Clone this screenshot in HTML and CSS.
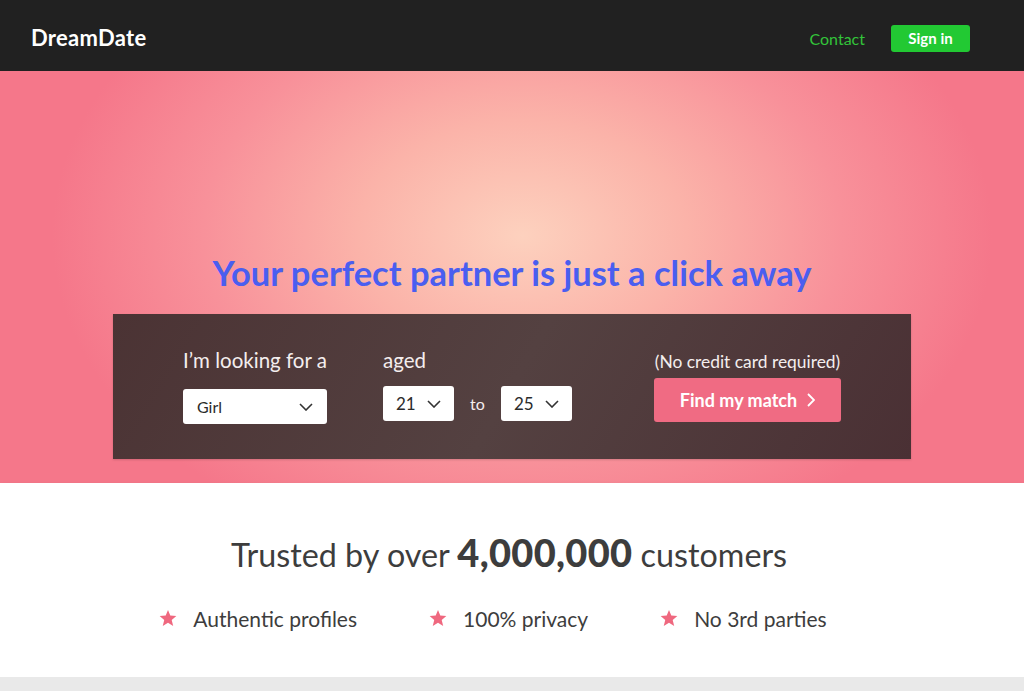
FILE: index.html
```html
<!DOCTYPE html>
<html lang="en">
<head>
    <meta charset="UTF-8">
    <meta name="viewport" content="width=device-width, initial-scale=1.0">
    <title>DreamDate</title>
    <link rel="stylesheet" href="styles.css">
</head>
<body>

    <!-- top bar -->
    <header class="navbar">
        <div class="logo">DreamDate</div>
        <nav class="nav-links">
            <a href="#" class="contact">Contact</a>
            <a href="#" class="signin">Sign in</a>
        </nav>
    </header>

    <!-- hero -->
    <section class="hero">
        <h1>Your perfect partner is just a click away</h1>

        <div class="search-box">
            <div class="col col-gender">
                <label>I’m looking for a</label>
                <div class="dropdown dropdown-wide">
                    <span>Girl</span>
                    <svg width="14" height="8" viewBox="0 0 14 8"><path d="M1 1l6 6 6-6" fill="none" stroke="#333" stroke-width="1.6"/></svg>
                </div>
            </div>

            <div class="col col-age">
                <label>aged</label>
                <div class="age-row">
                    <div class="dropdown dropdown-small">
                        <span>21</span>
                        <svg width="14" height="8" viewBox="0 0 14 8"><path d="M1 1l6 6 6-6" fill="none" stroke="#333" stroke-width="1.6"/></svg>
                    </div>
                    <span class="to">to</span>
                    <div class="dropdown dropdown-small">
                        <span>25</span>
                        <svg width="14" height="8" viewBox="0 0 14 8"><path d="M1 1l6 6 6-6" fill="none" stroke="#333" stroke-width="1.6"/></svg>
                    </div>
                </div>
            </div>

            <div class="col col-action">
                <div class="note">(No credit card required)</div>
                <button class="match-btn">Find my match
                    <svg width="8" height="14" viewBox="0 0 8 14"><path d="M1 1l6 6-6 6" fill="none" stroke="#fff" stroke-width="1.8"/></svg>
                </button>
            </div>
        </div>
    </section>

    <!-- trust -->
    <section class="trust">
        <h2>Trusted by over <strong>4,000,000</strong> customers</h2>
        <ul class="features">
            <li><svg class="star" width="18" height="17" viewBox="0 0 24 23"><path d="M12 0l3.1 7.6 8.2.6-6.3 5.3 2 8L12 17.2 4.9 21.5l2-8L.7 8.2l8.2-.6z" fill="#ef687f"/></svg>Authentic profiles</li>
            <li><svg class="star" width="18" height="17" viewBox="0 0 24 23"><path d="M12 0l3.1 7.6 8.2.6-6.3 5.3 2 8L12 17.2 4.9 21.5l2-8L.7 8.2l8.2-.6z" fill="#ef687f"/></svg>100% privacy</li>
            <li><svg class="star" width="18" height="17" viewBox="0 0 24 23"><path d="M12 0l3.1 7.6 8.2.6-6.3 5.3 2 8L12 17.2 4.9 21.5l2-8L.7 8.2l8.2-.6z" fill="#ef687f"/></svg>No 3rd parties</li>
        </ul>
    </section>

</body>
</html>
```

FILE: styles.css
```css
body {
    font-family: 'Lato', 'Open Sans', sans-serif;
    background-color: #e9e9e9;
    margin: 0;
    padding: 0;
}

.navbar {
    height: 71px;
    background-color: #212121;
    display: flex;
    align-items: center;
    justify-content: space-between;
    padding: 5px 54px 0 31px;
    box-sizing: border-box;
}

.logo {
    color: #fff;
    font-size: 22px;
    font-weight: 700;
    letter-spacing: 0.3px;
    margin-top: -2px;
}

.nav-links {
    display: flex;
    align-items: center;
    gap: 26px;
}

.nav-links a {
    text-decoration: none;
    font-size: 16px;
}

.contact {
    color: #33c43a;
}

.signin {
    background-color: #22c933;
    color: #fff;
    font-weight: 700;
    font-size: 15px !important;
    width: 79px;
    height: 27px;
    line-height: 27px;
    text-align: center;
    border-radius: 3px;
}

.hero {
    height: 412px;
    background: radial-gradient(ellipse 470px 330px at 51% 40%, #fdd1be 0%, #fbb3a9 35%, #f8919a 68%, #f5778a 100%);
    display: flex;
    flex-direction: column;
    align-items: center;
    justify-content: flex-end;
    padding-bottom: 24px;
    box-sizing: border-box;
}

.hero h1 {
    margin: 0 0 21px;
    font-size: 34.5px;
    line-height: 40px;
    font-weight: 700;
    color: #4a5ef0;
}

.search-box {
    width: 798px;
    height: 145px;
    box-sizing: border-box;
    background: linear-gradient(120deg, #4b3334 0%, #544141 50%, #4a3034 100%);
    box-shadow: 0 1px 2px rgba(0, 0, 0, 0.15);
    display: flex;
    align-items: flex-start;
    padding: 34px 70px 0 70px;
    color: #f4eeee;
}

.col label,
.note {
    display: block;
    font-size: 20.5px;
    line-height: 24px;
}

.col-gender {
    width: 144px;
    margin-right: 56px;
}

.col-age {
    width: 190px;
    margin-right: 81px;
}

.col-action {
    width: 187px;
    padding-top: 4px;
    text-align: center;
}

.note {
    font-size: 17.4px !important;
    line-height: 20px !important;
    margin-bottom: 6px;
    white-space: nowrap;
}

.dropdown {
    background-color: #fff;
    border-radius: 3px;
    height: 35px;
    display: flex;
    align-items: center;
    justify-content: space-between;
    box-sizing: border-box;
    color: #2b2b2b;
    font-size: 16px;
}

.dropdown-wide {
    width: 144px;
    margin-top: 17px;
    padding: 0 14px;
}

.dropdown-small {
    width: 71px;
    padding: 0 13px;
    font-size: 17px;
}

.age-row {
    display: flex;
    align-items: center;
    margin-top: 14px;
}

.to {
    width: 47px;
    text-align: center;
    font-size: 16px;
}

.match-btn {
    width: 187px;
    height: 44px;
    border: none;
    border-radius: 3px;
    background-color: #f06b83;
    color: #fff;
    font-family: inherit;
    font-size: 18px;
    font-weight: 700;
    display: flex;
    align-items: center;
    justify-content: center;
    gap: 10px;
    cursor: pointer;
}

.trust {
    height: 194px;
    background-color: #fff;
    box-shadow: 0 3px 6px rgba(0, 0, 0, 0.12);
    text-align: center;
    padding-top: 49px;
    box-sizing: border-box;
}

.trust h2 {
    margin: 0 0 0 -6px;
    font-size: 32.3px;
    line-height: 40px;
    font-weight: 400;
    color: #3d3d3d;
}

.trust strong {
    font-weight: 900;
    font-size: 38px;
    letter-spacing: 0.3px;
}

.features {
    list-style: none;
    margin: 32px 0 0;
    padding: 0 38px 0 0;
    display: flex;
    justify-content: center;
    gap: 72px;
}

.features li {
    font-size: 21px;
    line-height: 24px;
    color: #3d3d3d;
    display: flex;
    align-items: center;
}

.star {
    margin-right: 16px;
    margin-top: -2px;
}
```
